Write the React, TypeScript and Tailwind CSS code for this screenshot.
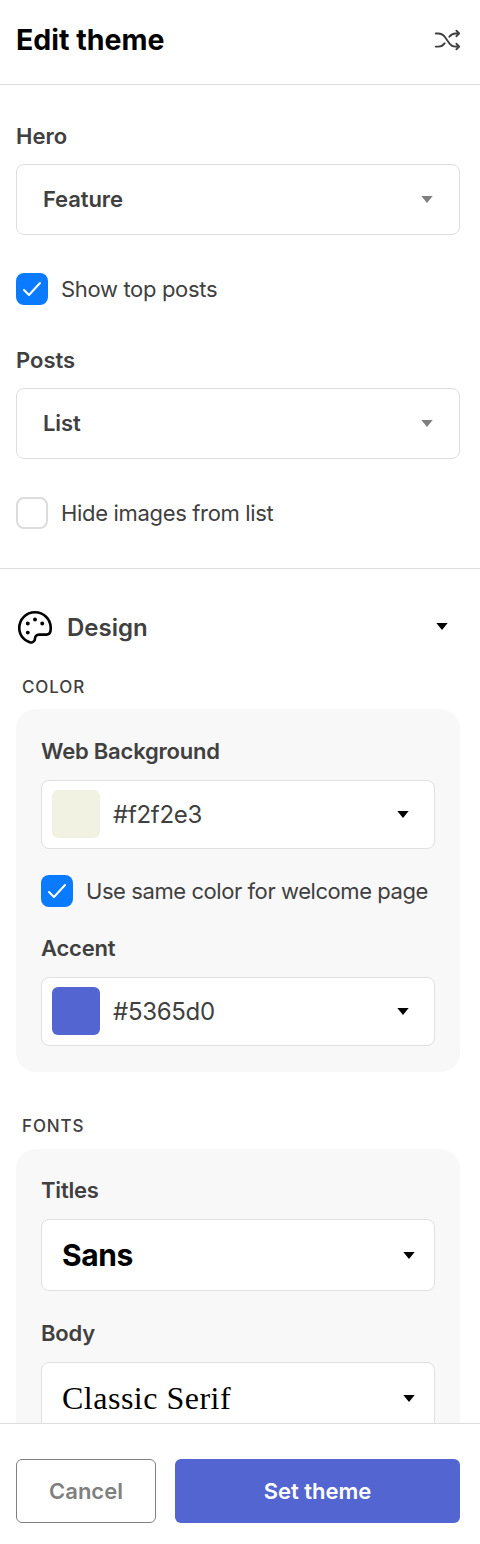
import { PiPalette, PiShuffle } from "react-icons/pi";

function Arrow({ className }: { className: string }) {
  return (
    <svg viewBox="0 0 12 7" className={className} fill="currentColor">
      <path d="M0.3 0h11.4L6 7z" />
    </svg>
  );
}

function Checkbox({ checked, label, tight }: { checked: boolean; label: string; tight?: boolean }) {
  return (
    <div className="flex items-center gap-[13px]">
      {checked ? (
        <div className="flex h-8 w-8 shrink-0 items-center justify-center rounded-lg bg-[#0a7aff]">
          <svg viewBox="0 0 20 16" className="h-[16px] w-[20px]" fill="none" stroke="white" strokeWidth="2" strokeLinecap="round" strokeLinejoin="round">
            <path d="M2 9l5 5L18 2" />
          </svg>
        </div>
      ) : (
        <div className="h-8 w-8 shrink-0 rounded-lg border-2 border-[#dcdcdc] bg-white" />
      )}
      <span className={`whitespace-nowrap text-[22px] leading-8 text-[#404040] ${tight ? "tracking-[-0.43px]" : "tracking-[-0.33px]"}`}>{label}</span>
    </div>
  );
}

function HeroSelect({ value }: { value: string }) {
  return (
    <div className="flex h-[71px] items-center justify-between rounded-lg border border-[#dedede] pl-[26px] pr-[26px]">
      <span className="text-[22px] font-semibold tracking-[-0.1px] text-[#404040]">{value}</span>
      <Arrow className="h-[7px] w-3 text-[#808080]" />
    </div>
  );
}

function ColorSelect({ color, value }: { color: string; value: string }) {
  return (
    <div className="flex h-[69px] items-center rounded-lg border border-[#e0e0e0] bg-white pl-[10px] pr-[25px]">
      <div className={`mb-[1px] h-12 w-12 rounded-md ${color}`} />
      <span className="ml-[13px] flex-1 pt-[1px] text-[24px] tracking-[-0.3px] text-[#404040]">{value}</span>
      <Arrow className="h-[7px] w-3 text-black" />
    </div>
  );
}

function CardLabel({ children }: { children: string }) {
  return <div className="text-[22px] leading-[30px] font-semibold tracking-[-0.2px] text-[#404040]">{children}</div>;
}

export default function App() {
  return (
    <div className="flex h-[1544px] w-[480px] flex-col overflow-hidden bg-white font-['Inter',sans-serif]">
      <div className="flex h-[85px] shrink-0 items-center justify-between border-b border-[#dedede] pb-1 pl-4 pr-[18px]">
        <h1 className="text-[28.5px] font-bold text-black">Edit theme</h1>
        <PiShuffle className="h-[30px] w-[30px] text-[#404040]" />
      </div>

      <div className="min-h-0 flex-1 overflow-hidden">
        <div className="border-b border-[#dedede] pt-[36px] pr-5 pb-[39px] pl-4">
          <div className="mb-[13px] text-[22px] leading-[30px] font-semibold text-[#404040]">Hero</div>
          <HeroSelect value="Feature" />
          <div className="mt-[38px]">
            <Checkbox checked label="Show top posts" />
          </div>
          <div className="mt-[40px] mb-[13px] text-[22px] leading-[30px] font-semibold text-[#404040]">Posts</div>
          <HeroSelect value="List" />
          <div className="mt-[38px]">
            <Checkbox checked={false} label="Hide images from list" />
          </div>
        </div>

        <div className="pr-5 pl-4">
          <div className="mt-[41px] flex h-9 items-center justify-between pr-3">
            <div className="-ml-[2px] flex items-center gap-[11px]">
              <PiPalette className="h-[42px] w-[42px] text-black" />
              <span className="text-[24px] font-semibold text-[#404040]">Design</span>
            </div>
            <Arrow className="mb-[3px] h-[7px] w-3 text-black" />
          </div>

          <div className="mt-[31px] ml-[6px] text-[17px] leading-5 font-medium tracking-[0.9px] text-[#404040]">COLOR</div>
          <div className="mt-3 rounded-[20px] bg-[#f8f8f8] px-[25px] pt-[27px] pb-[26px]">
            <CardLabel>Web Background</CardLabel>
            <div className="mt-[14px]">
              <ColorSelect color="bg-[#f2f2e3]" value="#f2f2e3" />
            </div>
            <div className="mt-[26px]">
              <Checkbox checked tight label="Use same color for welcome page" />
            </div>
            <div className="mt-[26px]">
              <CardLabel>Accent</CardLabel>
            </div>
            <div className="mt-[14px]">
              <ColorSelect color="bg-[#5365d0]" value="#5365d0" />
            </div>
          </div>

          <div className="mt-[44px] ml-[6px] text-[17px] leading-5 font-medium tracking-[0.9px] text-[#404040]">FONTS</div>
          <div className="mt-[13px] rounded-t-[20px] bg-[#f8f8f8] px-[25px] pt-[26px] pb-[40px]">
            <CardLabel>Titles</CardLabel>
            <div className="mt-[14px] flex h-[72px] items-center justify-between rounded-lg border border-[#e0e0e0] bg-white pl-5 pr-[19px]">
              <span className="pt-[1px] text-[30px] font-bold tracking-[-0.4px] text-black">Sans</span>
              <Arrow className="h-[7px] w-3 text-black" />
            </div>
            <div className="mt-[27px]">
              <CardLabel>Body</CardLabel>
            </div>
            <div className="mt-[14px] flex h-[72px] items-center justify-between rounded-lg border border-[#e0e0e0] bg-white pl-5 pr-[19px]">
              <span className="font-['Liberation_Serif',serif] text-[32px] tracking-[0.5px] text-black">Classic Serif</span>
              <Arrow className="h-[7px] w-3 text-black" />
            </div>
          </div>
        </div>
      </div>

      <div className="flex h-[121px] shrink-0 gap-[19px] border-t border-[#dedede] bg-white pt-[35px] pr-5 pl-4">
        <button className="h-16 w-[140px] rounded-md border border-[#808080] bg-white text-[22px] font-semibold text-[#808080]">Cancel</button>
        <button className="h-16 flex-1 rounded-md bg-[#5365d0] text-[22px] font-semibold text-white">Set theme</button>
      </div>
    </div>
  );
}
